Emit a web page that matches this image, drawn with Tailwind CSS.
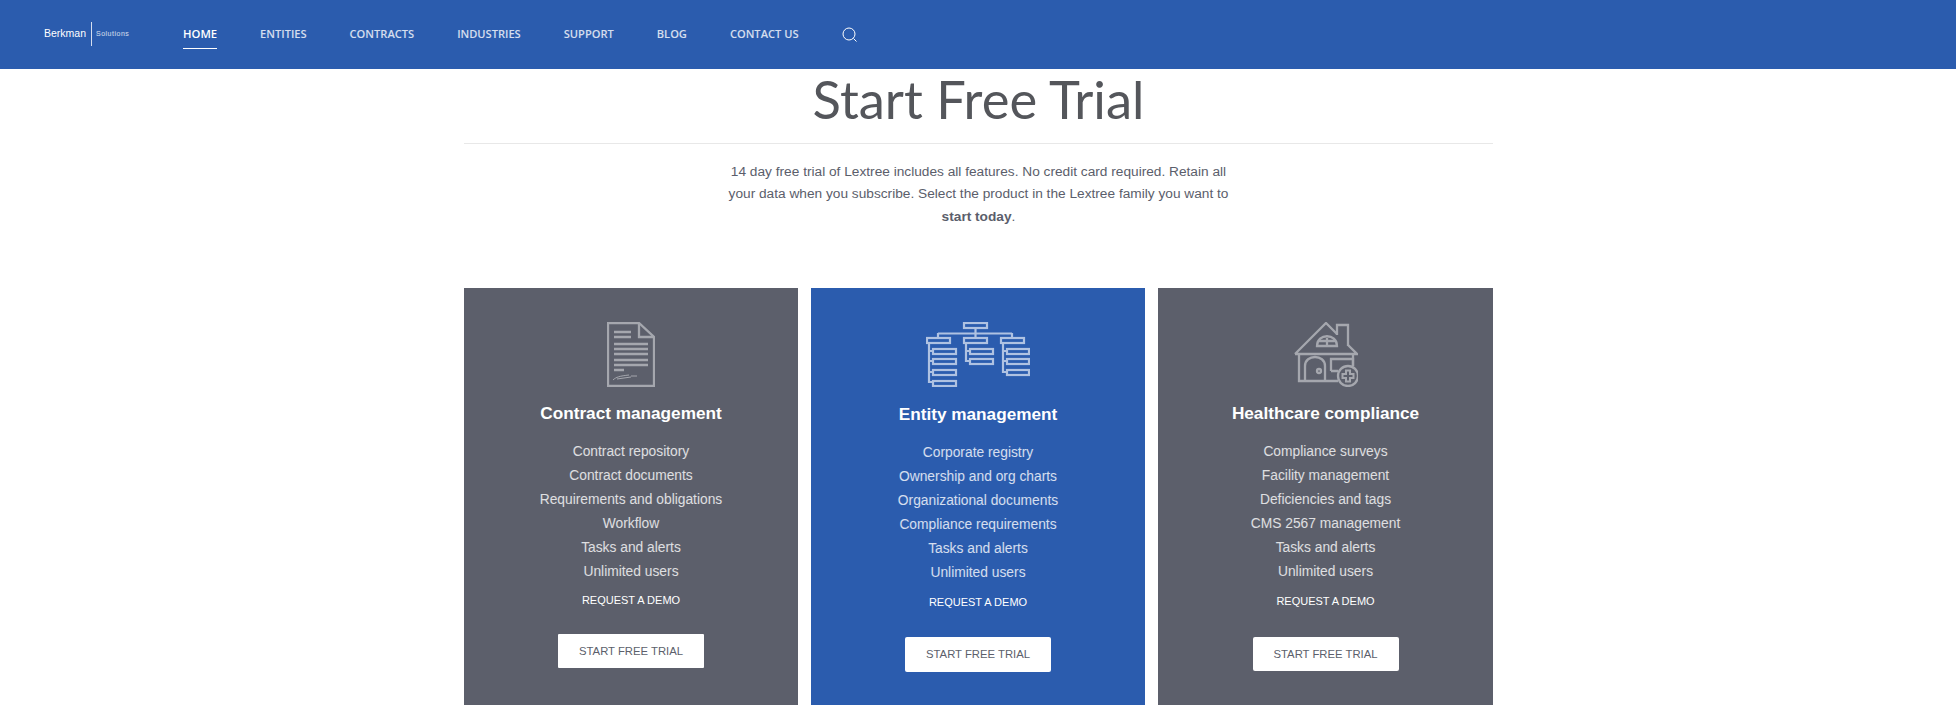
<!DOCTYPE html>
<html lang="en">
<head>
  <meta charset="UTF-8" />
  <title>Start Free Trial</title>
  <script src="https://cdn.jsdelivr.net/npm/@tailwindcss/browser@4"></script>
</head>
<body class="bg-white h-[714px] overflow-hidden font-['Liberation_Sans',sans-serif]">
  <!-- top nav -->
  <header class="h-[69px] bg-[#2b5cae] flex items-center pl-[44px]">
    <div class="w-[139px] flex items-center h-[24px] -mt-[2px] text-white">
      <span class="text-[10.5px] leading-none w-[47px]">Berkman</span>
      <span class="w-[1px] h-[24px] bg-white/80 mr-[4px]"></span>
      <span class="text-[7px] leading-none tracking-[0.5px] text-white/80 font-light">Solutions</span>
    </div>
    <nav class="flex items-center gap-[43px] font-['Open_Sans',sans-serif] font-semibold text-[11.1px] text-white/80">
      <a class="relative text-white text-[11.3px]">HOME<span class="absolute left-0 right-0 top-[22px] h-[1px] bg-white"></span></a>
      <a>ENTITIES</a>
      <a>CONTRACTS</a>
      <a>INDUSTRIES</a>
      <a>SUPPORT</a>
      <a>BLOG</a>
      <a>CONTACT US</a>
      <svg class="w-[15px] h-[15px]" viewBox="0 0 15 15" fill="none" stroke="white" stroke-width="1"><circle cx="7" cy="7" r="6"/><path d="M11.5 11.5l3 3"/></svg>
    </nav>
  </header>

  <main class="w-[1029px] ml-[464px]">
    <h1 class="text-center text-[52.5px] leading-[60px] text-[#54565b] font-['Lato',sans-serif] pb-[14px] border-b border-[#e8e8e8]">Start Free Trial</h1>
    <p class="w-[520px] mx-auto mt-[17px] text-center text-[13.7px] leading-[22.4px] text-[#5b5e6b]">14 day free trial of Lextree includes all features. No credit card required. Retain all your data when you subscribe. Select the product in the Lextree family you want to <b>start today</b>.</p>

    <div class="grid grid-cols-[334px_334px_335px] gap-[13px] mt-[60px] h-[417px]">
      <!-- contract -->
      <section class="bg-[#5c5f6b] flex flex-col items-center pt-[34px] text-center">
        <svg class="w-[48px] h-[65px]" viewBox="0 0 48 65" fill="none" stroke="#a5a7ae" stroke-width="2.300">
          <path d="M1 1H32L47 15V64H1Z"/>
          <path d="M32 1V15H47"/>
          <path d="M7 10H24M7 15H24M7 22H41M7 27H41M7 32H41M7 38H41M7 43H41M7 48H17" stroke-width="2.600"/>
          <path d="M6 58C9 55 13 54 22 53 M10 57L24 55 M24 54L30 54" stroke-width="1"/>
        </svg>
        <h2 class="mt-[16px] text-[17.2px] leading-[20px] font-bold text-white">Contract management</h2>
        <ul class="mt-[17px] text-[13.8px] leading-[24px] text-white/80">
          <li>Contract repository</li>
          <li>Contract documents</li>
          <li>Requirements and obligations</li>
          <li>Workflow</li>
          <li>Tasks and alerts</li>
          <li>Unlimited users</li>
        </ul>
        <a class="mt-[6px] text-[11px] leading-[20px] text-white">REQUEST A DEMO</a>
        <a class="mt-[24px] w-[146px] h-[34px] bg-white rounded-[1px] text-[11.3px] leading-[34px] text-[#5c5f6b]">START FREE TRIAL</a>
      </section>

      <!-- entity -->
      <section class="bg-[#2b5cae] flex flex-col items-center pt-[34px] text-center">
        <svg class="w-[104px] h-[65px]" viewBox="0 0 104 65" fill="none" stroke="#afc2e2" stroke-width="2.200">
          <rect x="38" y="1" width="23" height="5"/>
          <path d="M49.500 6V11M12 11.500H86M12 11V16M49.500 11V16M86 11V16"/>
          <rect x="1" y="16" width="23" height="5"/>
          <rect x="38" y="16" width="23" height="5"/>
          <rect x="75" y="16" width="23" height="5"/>
          <path d="M3 21V60H7M3 29H7M3 39H7M3 50H7"/>
          <rect x="7" y="27" width="23" height="5"/>
          <rect x="7" y="37" width="23" height="5"/>
          <rect x="7" y="48" width="23" height="5"/>
          <rect x="7" y="59" width="23" height="5"/>
          <path d="M40 21V39H44M40 29H44"/>
          <rect x="44" y="27" width="23" height="5"/>
          <rect x="44" y="37" width="23" height="5"/>
          <path d="M77 21V50H81M77 29H81M77 39H81"/>
          <rect x="81" y="27" width="22" height="5"/>
          <rect x="81" y="37" width="22" height="5"/>
          <rect x="81" y="48" width="22" height="5"/>
        </svg>
        <h2 class="mt-[17px] text-[17.2px] leading-[20px] font-bold text-white">Entity management</h2>
        <ul class="mt-[17px] text-[13.8px] leading-[24px] text-white/80">
          <li>Corporate registry</li>
          <li>Ownership and org charts</li>
          <li>Organizational documents</li>
          <li>Compliance requirements</li>
          <li>Tasks and alerts</li>
          <li>Unlimited users</li>
        </ul>
        <a class="mt-[7px] text-[11px] leading-[20px] text-white">REQUEST A DEMO</a>
        <a class="mt-[25px] w-[146px] h-[35px] bg-white rounded-[2px] text-[11.3px] leading-[35px] text-[#5c5f6b]">START FREE TRIAL</a>
      </section>

      <!-- healthcare -->
      <section class="bg-[#5c5f6b] flex flex-col items-center pt-[34px] text-center">
        <svg class="w-[64px] h-[65px]" viewBox="0 0 64 65" fill="none" stroke="#a5a7ae" stroke-width="2.300">
          <path d="M1 32L32 1L43 12M54 23L63 32H1"/>
          <path d="M43 13V3H54V24"/>
          <path d="M23 24C23 11 43 11 43 24Z M33 16V24M25 19H41"/>
          <path d="M5 32V59H44M59 32V44"/>
          <path d="M11 59V44C11 32 31 32 31 44V59"/>
          <circle cx="25" cy="49" r="2"/>
          <path d="M37 49V37H59V44M37 49H44"/>
          <circle cx="54" cy="54" r="10" fill="#5c5f6b"/>
          <path d="M52 48.500H56V52H59.500V56H56V59.500H52V56H48.500V52H52Z" stroke-width="2"/>
        </svg>
        <h2 class="mt-[16px] text-[17.2px] leading-[20px] font-bold text-white">Healthcare compliance</h2>
        <ul class="mt-[17px] text-[13.8px] leading-[24px] text-white/80">
          <li>Compliance surveys</li>
          <li>Facility management</li>
          <li>Deficiencies and tags</li>
          <li>CMS 2567 management</li>
          <li>Tasks and alerts</li>
          <li>Unlimited users</li>
        </ul>
        <a class="mt-[7px] text-[11px] leading-[20px] text-white">REQUEST A DEMO</a>
        <a class="mt-[26px] w-[146px] h-[34px] bg-white rounded-[2px] text-[11.3px] leading-[34px] text-[#5c5f6b]">START FREE TRIAL</a>
      </section>
    </div>
  </main>
</body>
</html>
